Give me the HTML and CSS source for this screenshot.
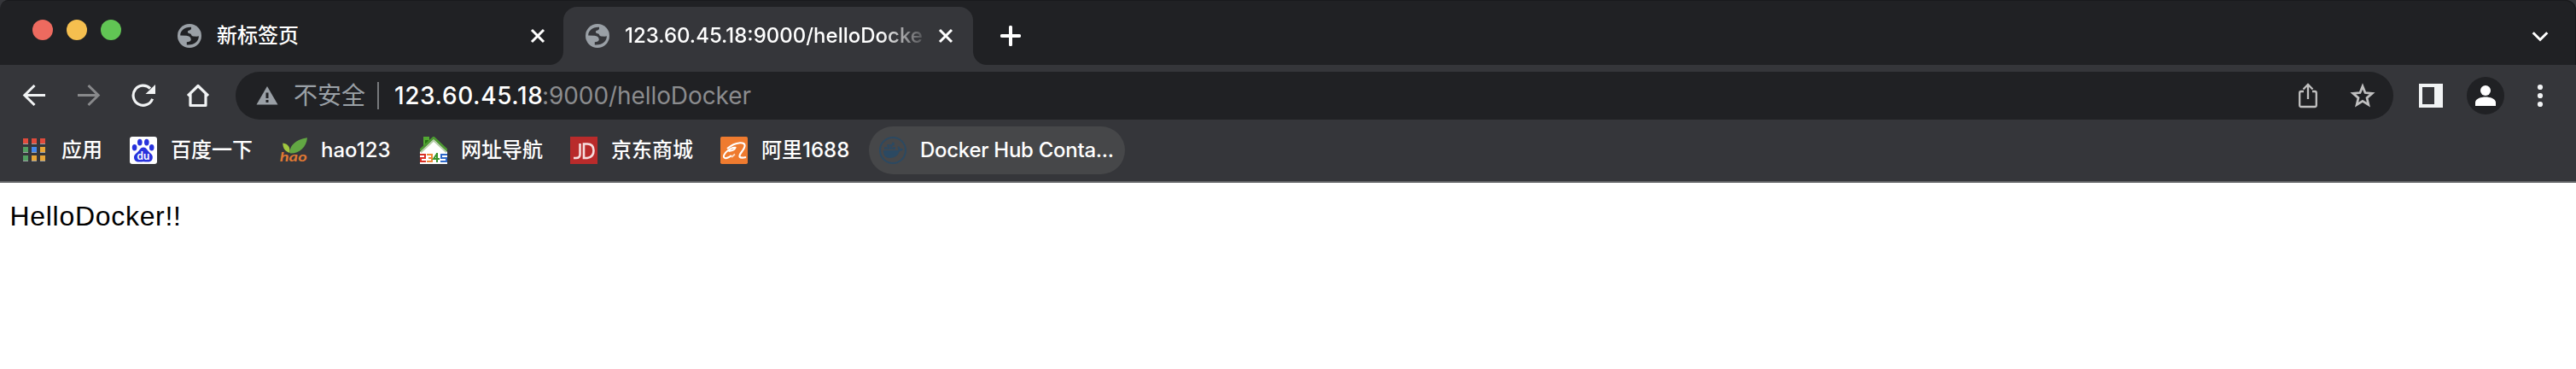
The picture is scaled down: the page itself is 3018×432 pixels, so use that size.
FILE: index.html
```html
<!DOCTYPE html>
<html lang="zh-CN">
<head>
<meta charset="utf-8">
<title>123.60.45.18:9000/helloDocker</title>
<link rel="stylesheet" href="styles.css">
</head>
<body>
<svg class="defs" width="0" height="0">
  <symbol id="globe" viewBox="0 0 28 28">
    <circle cx="14" cy="14" r="14" fill="#9aa0a6"/>
    <path class="sea" d="M3.2 13.4C3.2 8.5 7.5 3.6 16 3.8C16.3 6.5 15.5 7.3 13.2 7.8C11 8.3 11.9 11 14 11.3C16.8 11.6 15.6 14.3 18.5 14.5L22.5 14.8L24.9 14.2C24.8 20 20 25 10.8 24.4L10.8 21.2C13.5 21.1 15.8 20.3 15.8 18.2C15.7 15.8 13.6 13.9 10.5 13.8Z"/>
  </symbol>
  <symbol id="close" viewBox="0 0 20 20">
    <path d="M3 3L17 17M17 3L3 17" stroke="#fff" stroke-width="3" fill="none"/>
  </symbol>
</svg>
<header class="browser">
  <div class="tabstrip">
    <div class="lights"><i class="light red"></i><i class="light yellow"></i><i class="light green"></i></div>
    <div class="tab">
      <svg class="favicon"><use href="#globe"/></svg>
      <span class="tab-title">新标签页</span>
      <svg class="close"><use href="#close"/></svg>
    </div>
    <div class="tab active">
      <svg class="favicon"><use href="#globe"/></svg>
      <span class="tab-title latin">123.60.45.18:9000/helloDocke</span>
      <svg class="close"><use href="#close"/></svg>
    </div>
    <svg class="new-tab" viewBox="0 0 24 24"><path d="M12 1.8V22.2M1.8 12H22.2" stroke="#fff" stroke-width="4" stroke-linecap="round"/></svg>
    <svg class="chevron" viewBox="0 0 20 12"><path d="M1.7 1.2L10 9.5L18.3 1.2" fill="none" stroke="#fff" stroke-width="3"/></svg>
  </div>
  <div class="toolbar">
    <nav class="nav">
      <svg viewBox="0 0 28 28"><path d="M27 13.5H3M14.5 2L2.8 13.5L14.5 25" fill="none" stroke="#f1f3f4" stroke-width="3"/></svg>
      <svg viewBox="0 0 28 28"><path d="M1 13.5H25M13.5 2L25.2 13.5L13.5 25" fill="none" stroke="#88898b" stroke-width="3"/></svg>
      <svg viewBox="0 0 28 28"><path d="M24.6 17.7A11.6 11.6 0 1 1 22 5.6" fill="none" stroke="#f1f3f4" stroke-width="3.1"/><path d="M28 1V12H16.5Z" fill="#f1f3f4"/></svg>
      <svg viewBox="0 0 28 28"><path d="M2 14.2L14 2.5L26 14.2M5 12V25.5H23V12" fill="none" stroke="#f1f3f4" stroke-width="3.2" stroke-linejoin="round"/></svg>
    </nav>
    <div class="omnibox">
      <svg class="warning" viewBox="0 0 26 22"><path d="M13 0L25.5 21.5H.5Z" fill="#9aa0a6"/><path d="M11.5 7.5h3v6.5h-3zM11.5 16h3v3h-3z" fill="#202124"/></svg>
      <span class="insecure">不安全</span>
      <i class="divider"></i>
      <span class="host">123.60.45.18</span><span class="path">:9000/helloDocker</span>
      <svg class="share" viewBox="0 0 24 30"><path d="M7 10H4Q2.2 10 2.2 12V26Q2.2 28 4 28H20Q21.8 28 21.8 26V12Q21.8 10 20 10H17M12 19V2.5M6.5 7.5L12 2L17.5 7.5" fill="none" stroke="#c0c0c0" stroke-width="2.3"/></svg>
      <svg class="star" viewBox="0 0 30 30"><path d="M15 4L18 11.6L26.2 12.3L20 17.6L21.9 25.6L15 21.4L8.1 25.6L10 17.6L3.8 12.3L12 11.6Z" fill="none" stroke="#c0c0c0" stroke-width="2.7"/></svg>
    </div>
    <svg class="panel" viewBox="0 0 28 28"><path fill="#f1f3f4" fill-rule="evenodd" d="M0 0H28V28H0ZM4 4V24H18V4Z"/></svg>
    <svg class="avatar" viewBox="0 0 44 44"><circle cx="22" cy="22" r="22" fill="#202124"/><circle cx="22" cy="16" r="6" fill="#fff"/><path d="M10 34V30C10 25.5 17 23.5 22 23.5S34 25.5 34 30V34Z" fill="#fff"/></svg>
    <svg class="menu" viewBox="0 0 8 28"><g fill="#f1f3f4"><circle cx="4" cy="4" r="3.1"/><circle cx="4" cy="14" r="3.1"/><circle cx="4" cy="24" r="3.1"/></g></svg>
  </div>
  <div class="bookmarks">
    <a class="bookmark b-apps"><svg viewBox="0 0 32 32">
      <g fill="#a0a4a6"><path d="M3 8h6v1H3zM13 8h6v1h-6zM23 8h6v1h-6zM3 18h6v1H3zM13 18h6v1h-6zM23 18h6v1h-6zM3 28h6v1H3zM13 28h6v1h-6zM23 28h6v1h-6z"/></g>
      <path d="M3 2h6v6H3zM13 2h6v6h-6zM23 2h6v6h-6z" fill="#e04b3c"/><path d="M3 12h6v6H3zM3 22h6v6H3z" fill="#529e60"/><path d="M13 12h6v6h-6z" fill="#4587ea"/><path d="M23 12h6v6h-6zM13 22h6v6h-6zM23 22h6v6h-6z" fill="#e6a538"/></svg><span>应用</span></a>
    <a class="bookmark b-baidu"><svg viewBox="0 0 32 32"><rect width="32" height="32" rx="3" fill="#fff"/><g fill="#2832dc"><ellipse cx="11.8" cy="6.6" rx="2.8" ry="3.9"/><ellipse cx="19.8" cy="6.6" rx="2.8" ry="3.9"/><ellipse cx="5.6" cy="12.7" rx="2.8" ry="3.7"/><ellipse cx="25.7" cy="12.8" rx="2.8" ry="3.7"/><path d="M16 12.5C19.5 12.5 20.5 16 23 18.2C26 20.5 27.4 22.4 26.7 25.4C25.8 29.7 22 29.8 16 29.3C10 29.8 6 29.7 5.1 25.4C4.4 22.4 6 20.5 9 18.2C11.5 16 12.5 12.5 16 12.5Z"/></g><text x="8.5" y="26.8" class="du">du</text></svg><span>百度一下</span></a>
    <a class="bookmark b-hao"><svg viewBox="0 0 32 32"><path d="M12 19.5C10 12 18 3 32 1.3C31 13 22 20 12 19.5Z" fill="#62a743"/><path d="M3.3 7.5C9 8.5 12 11 11.5 19C6 17 3.4 14 3.3 7.5Z" fill="#a1c83f"/><text x="-.3" y="28.6" class="hao" textLength="32" lengthAdjust="spacingAndGlyphs">hao</text></svg><span class="latin">hao123</span></a>
    <a class="bookmark b-2345"><svg viewBox="0 0 32 32"><path d="M0 18L16 3L32 18V32H0Z" fill="#fff"/><path d="M4 0h7v8l-7 4z" fill="#52a832"/><path d="M6 4h4v4H6z" fill="#267414"/><path d="M0 16L16 1L32 16" fill="none" stroke="#4d9b32" stroke-width="2.6"/><path d="M1 18.3L16 4.5L31 18.3" fill="none" stroke="#b7cfaa" stroke-width="2"/><g fill="none" stroke-width="2"><path d="M0 21H6V25H1V29H7" stroke="#d93025"/><path d="M8 21H14V25H10M14 25V29H8" stroke="#ef8735"/><path d="M20 19V30M20 20L16 26H23" stroke="#38942a"/><path d="M32 21H25V25H31V29H24" stroke="#2e68c7"/></g></svg><span>网址导航</span></a>
    <a class="bookmark b-jd"><svg viewBox="0 0 32 32"><rect width="32" height="32" fill="#b92b2b"/><path d="M11.5 8V20.5Q11.5 25 7 25H4M16 8.5H20Q27.5 8.5 27.5 16.3T20 25H16Z" fill="none" stroke="#f5dede" stroke-width="2.6"/></svg><span>京东商城</span></a>
    <a class="bookmark b-ali"><svg viewBox="0 0 32 32"><rect width="32" height="32" rx="1.8" fill="#ef7b2f"/><path d="M9.5 17Q17 16 17.5 12.8Q14 12 9 16C5 19 1.5 24.5 6 25.2Q9 25.3 13 22" fill="none" stroke="#fff" stroke-width="2"/><path d="M8 14Q15 8 23 7.3C31 7 29 12 25.5 17Q22 21.5 22.5 23.5Q24 25.5 30 24" fill="none" stroke="#fff" stroke-width="2.1"/><path d="M13 24l4-3.5" stroke="#fbdcc5" stroke-width="1.8"/></svg><span class="latin">阿里1688</span></a>
    <a class="bookmark b-docker"><svg viewBox="0 0 32 32"><circle cx="16" cy="16" r="15" fill="none" stroke="#2b4962" stroke-width="2"/><g fill="#2b4962"><path d="M4.8 16H22.3Q22.8 13.5 21.5 12.5L22.7 11Q24.6 12.3 24.6 14Q26.5 13.5 28 14.7Q26.7 17 24 17Q21 25 12.5 25Q4.7 25 4.8 16Z"/><path d="M6 12.3h2.8v2.8H6zM9.4 12.3h2.8v2.8H9.4zM12.8 12.3h2.8v2.8h-2.8zM16.2 12.3H19v2.8h-2.8zM9.4 9h2.8v2.8H9.4zM12.8 9h2.8v2.8h-2.8zM15 6.8h2.8v3.4H15z"/></g></svg><span class="latin">Docker Hub Conta...</span></a>
  </div>
</header>
<main class="page">HelloDocker!!</main>
</body>
</html>
```
FILE: styles.css
```css
* { box-sizing: border-box; }
body {
  margin: 0;
  background: #fff;
  font-family: Inter, "Noto Sans CJK SC", sans-serif;
  color: #fff;
}
svg { display: block; flex: none; }
.defs { display: none; }
.browser {
  background: #35363a;
  border-bottom: 2px solid #626366;
  height: 214px;
}
.tabstrip {
  display: flex;
  align-items: flex-start;
  height: 76px;
  padding: 8px 32px 0 38px;
  background: #202124;
  border-radius: 10px 12px 0 0;
  box-shadow: inset -1px 1px 0 #191a1c;
}
.lights { display: flex; gap: 16px; padding-top: 15px; width: 142px; }
.light { width: 24px; height: 24px; border-radius: 50%; }
.red { background: #ed6a5f; }
.yellow { background: #f5bf4f; }
.green { background: #61c554; }
.tab {
  position: relative;
  display: flex;
  align-items: center;
  width: 480px;
  height: 68px;
  padding: 0 22px 0 26px;
}
.tab:not(.active) { padding: 0 20px 0 28px; }
.tab.active { background: #35363a; border-radius: 16px 16px 0 0; }
.active::before, .active::after {
  content: "";
  position: absolute;
  bottom: 0;
  width: 16px;
  height: 16px;
}
.active::before { left: -16px; background: radial-gradient(circle at 0 0, transparent 15.5px, #35363a 16.5px); }
.active::after { right: -16px; background: radial-gradient(circle at 100% 0, transparent 15.5px, #35363a 16.5px); }
.favicon { width: 28px; height: 28px; color: #202124; fill: currentColor; }
.active .favicon { color: #35363a; }
.tab-title {
  flex: 1;
  margin: 0 14px 0 18px;
  white-space: nowrap;
  font-size: 24px;
  line-height: 36px;
  font-weight: 500;
}
.active .tab-title {
  -webkit-mask-image: linear-gradient(90deg, #000 300px, transparent 358px);
  mask-image: linear-gradient(90deg, #000 300px, transparent 358px);
}
.close { width: 20px; height: 20px; }
.new-tab { width: 24px; height: 24px; margin: 22px 0 0 32px; }
.chevron { width: 20px; height: 12px; margin: 29px 0 0 auto; }
.toolbar {
  display: flex;
  align-items: center;
  height: 72px;
  padding: 0 38px 0 26px;
}
.nav { display: flex; gap: 36px; width: 250px; }
.nav svg { width: 28px; height: 28px; }
.omnibox {
  display: flex;
  align-items: center;
  width: 2528px;
  height: 56px;
  padding: 0 21px 0 24px;
  border-radius: 28px;
  background: #202124;
  font-size: 28px;
  line-height: 40px;
  white-space: nowrap;
}
.warning { width: 26px; height: 22px; }
.insecure { width: 116px; padding-left: 18px; color: #9aa0a6; }
.divider { width: 2px; height: 32px; background: #77797c; margin-right: 18px; }
.host { width: 173px; letter-spacing: .6px; font-weight: 500; }
.path { color: #8b8c8e; letter-spacing: -.08px; }
.share { width: 24px; height: 30px; margin-left: auto; }
.star { width: 30px; height: 30px; margin-left: 37px; }
.panel { width: 28px; height: 28px; margin-left: 30px; }
.avatar { width: 44px; height: 44px; margin-left: 28px; }
.menu { width: 8px; height: 28px; margin-left: auto; }
.bookmarks { display: flex; height: 56px; padding-left: 12px; }
.bookmark {
  display: flex;
  align-items: center;
  gap: 16px;
  height: 56px;
  padding-left: 12px;
  border-radius: 28px;
  font-size: 24px;
  line-height: 36px;
  font-weight: 500;
  white-space: nowrap;
}
.bookmark svg { width: 32px; height: 32px; }
.b-apps { width: 128px; }
.b-baidu { width: 176px; }
.b-hao { width: 164px; }
.b-2345 { width: 176px; }
.b-jd { width: 176px; }
.b-ali { width: 186px; }
.b-docker { width: 300px; background: #464749; letter-spacing: -.28px; }
.du { font: bold 13px Lato, sans-serif; fill: #fff; }
.hao { font: italic bold 16px Lato, sans-serif; fill: #df7833; }
.page {
  padding: 17px 11.5px;
  color: #000;
  font: 32px/44px "Liberation Sans", Arial, sans-serif;
  letter-spacing: .7px;
}
```
